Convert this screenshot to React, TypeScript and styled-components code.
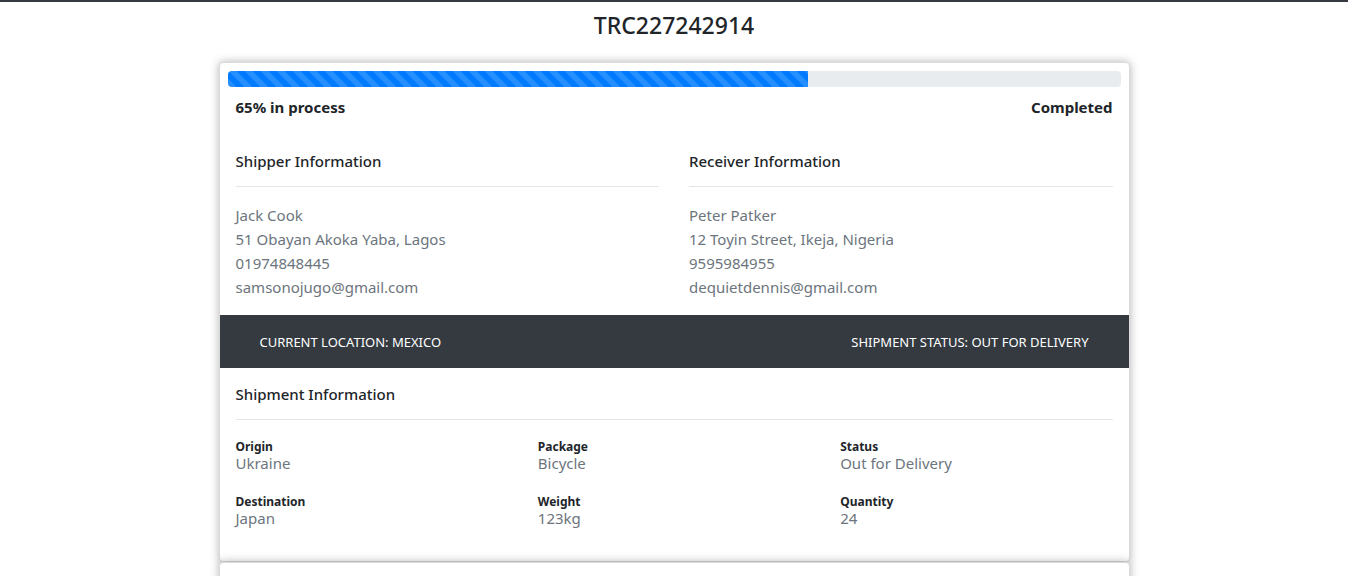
import React from "react";
import styled, { createGlobalStyle } from "styled-components";

const GlobalStyle = createGlobalStyle`
  *, *::before, *::after { box-sizing: border-box; }
  body {
    margin: 0;
    background: #fff;
    color: #212529;
    font-family: "Noto Sans", "Open Sans", sans-serif;
    font-size: 15px;
    line-height: 24px;
  }
`;

const Page = styled.main`
  display: flex;
  flex-direction: column;
  align-items: center;
  height: 100vh;
  padding: 0 16px;
  overflow: hidden;
  border-top: 2px solid #343a40;
`;

const TrackingNumber = styled.h1`
  margin: 9px 0 23px;
  font-size: 23px;
  font-weight: 500;
  line-height: 28px;
`;

const Card = styled.section`
  flex: none;
  width: 100%;
  max-width: 911px;
  min-height: 80px;
  border: 1px solid #dadada;
  border-radius: 4px;
  background: #fff;
  box-shadow: 0 0 10px rgba(0, 0, 0, 0.3);
`;

const ProgressArea = styled.div`
  padding: 8px;
`;

const ProgressTrack = styled.div`
  height: 16px;
  overflow: hidden;
  border-radius: 4px;
  background: #e9ecef;
`;

const ProgressFill = styled.div`
  height: 100%;
  background-color: #007bff;
  background-image: linear-gradient(
    45deg,
    rgba(255, 255, 255, 0.15) 25%,
    transparent 25%,
    transparent 50%,
    rgba(255, 255, 255, 0.15) 50%,
    rgba(255, 255, 255, 0.15) 75%,
    transparent 75%,
    transparent
  );
  background-size: 16px 16px;
`;

const ProgressLabels = styled.div`
  display: flex;
  justify-content: space-between;
  padding: 8px 8px 0;
  font-weight: 700;
`;

const Parties = styled.div`
  display: grid;
  grid-template-columns: 1fr 1fr;
  gap: 30px;
  padding: 22px 16px 16px;
`;

const SectionTitle = styled.h2`
  margin: 0 0 16px;
  padding-bottom: 13px;
  border-bottom: 1px solid #e5e5e5;
  font-size: 15px;
  font-weight: 500;
  line-height: 24px;
`;

const Address = styled.address`
  display: flex;
  flex-direction: column;
  color: #6c757d;
  font-style: normal;
`;

const StatusBar = styled.div`
  display: flex;
  justify-content: space-between;
  padding: 15px 40px 14px;
  background: #343a40;
  color: #fff;
  font-size: 13px;
  line-height: 24px;
  text-transform: uppercase;
`;

const Shipment = styled.div`
  padding: 14px 16px 34px;
`;

const Facts = styled.dl`
  display: grid;
  grid-template-columns: repeat(3, 1fr);
  column-gap: 30px;
  row-gap: 19px;
  margin: 0;
`;

const Fact = styled.div`
  padding-top: 2px;
  line-height: 17px;
`;

const FactName = styled.dt`
  font-size: 12px;
  font-weight: 700;
`;

const FactValue = styled.dd`
  margin: 0;
  color: #6c757d;
`;

const parties = [
  {
    title: "Shipper Information",
    lines: ["Jack Cook", "51 Obayan Akoka Yaba, Lagos", "01974848445", "samsonojugo@gmail.com"],
  },
  {
    title: "Receiver Information",
    lines: ["Peter Patker", "12 Toyin Street, Ikeja, Nigeria", "9595984955", "dequietdennis@gmail.com"],
  },
];

const facts = [
  ["Origin", "Ukraine"],
  ["Package", "Bicycle"],
  ["Status", "Out for Delivery"],
  ["Destination", "Japan"],
  ["Weight", "123kg"],
  ["Quantity", "24"],
];

export default function App() {
  const progress = 65;
  return (
    <>
      <GlobalStyle />
      <Page>
        <TrackingNumber>TRC227242914</TrackingNumber>
        <Card>
          <ProgressArea>
            <ProgressTrack
              role="progressbar"
              aria-label="Shipment progress"
              aria-valuenow={progress}
              aria-valuemin={0}
              aria-valuemax={100}
            >
              <ProgressFill style={{ width: `${progress}%` }} />
            </ProgressTrack>
            <ProgressLabels>
              <span>{progress}% in process</span>
              <span>Completed</span>
            </ProgressLabels>
          </ProgressArea>
          <Parties>
            {parties.map((party) => (
              <div key={party.title}>
                <SectionTitle>{party.title}</SectionTitle>
                <Address>
                  {party.lines.map((line) => (
                    <span key={line}>{line}</span>
                  ))}
                </Address>
              </div>
            ))}
          </Parties>
          <StatusBar>
            <span>Current Location: Mexico</span>
            <span>Shipment Status: Out for Delivery</span>
          </StatusBar>
          <Shipment>
            <SectionTitle>Shipment Information</SectionTitle>
            <Facts>
              {facts.map(([name, value]) => (
                <Fact key={name}>
                  <FactName>{name}</FactName>
                  <FactValue>{value}</FactValue>
                </Fact>
              ))}
            </Facts>
          </Shipment>
        </Card>
        <Card />
      </Page>
    </>
  );
}
